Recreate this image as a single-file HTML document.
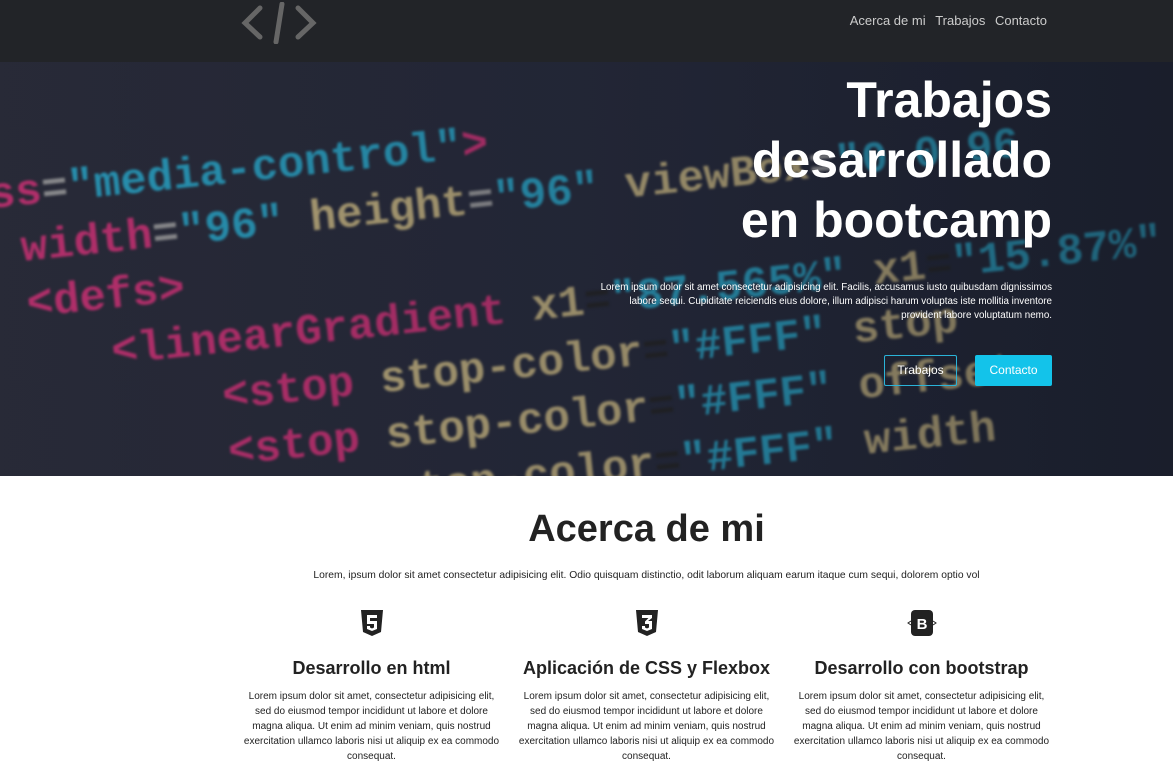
<!DOCTYPE html>
<html><head><meta charset="utf-8"><style>
*{margin:0;padding:0;box-sizing:border-box}
body{width:1173px;height:782px;overflow:hidden;font-family:"Liberation Sans",sans-serif;background:#fff;color:#222}
.nav{position:absolute;left:0;top:0;width:1173px;height:62px;background:#222428;z-index:3}
.nav .links{position:absolute;right:126px;top:13px;font-size:13px;color:#ccc}
.nav .links span{margin-left:6px}
.hero{position:absolute;left:0;top:62px;width:1173px;height:414px;overflow:hidden;background:linear-gradient(90deg,#2a2c3a,#262a3c 50%,#1e2436)}
.code{position:absolute;left:-40px;top:110px;font-family:"Liberation Mono",monospace;font-size:44px;font-weight:bold;line-height:56px;transform:rotate(-6deg);transform-origin:0 0;white-space:pre;filter:blur(1.2px);opacity:.85}
.p{color:#e0337e}.c{color:#2ab3d8}.y{color:#d8c48a}.w{color:#aaa}
.shade{position:absolute;inset:0;background:linear-gradient(90deg,rgba(20,22,30,.1),rgba(20,22,30,.25) 60%,rgba(20,22,30,.45))}
.ht{position:absolute;right:121px;top:8px;text-align:right;color:#fff;font-size:50px;font-weight:bold;line-height:60px}
.hp{position:absolute;right:121px;top:219px;width:465px;text-align:right;color:#fff;font-size:9.8px;line-height:14px}
.b1{position:absolute;left:884px;top:293px;width:73px;height:31px;border:1px solid #2ab3d8;color:#fff;font-size:12px;text-align:center;line-height:29px;border-radius:2px}
.b2{position:absolute;left:975px;top:293px;width:77px;height:31px;background:#13c3ea;color:#fff;font-size:12px;text-align:center;line-height:31px;border-radius:2px}
h2{position:absolute;top:508px;left:0;width:1293px;text-align:center;font-size:38px;color:#222}
.sub{position:absolute;top:570px;left:0;width:1293px;text-align:center;font-size:10.3px}
.col{position:absolute;top:610px;width:275px;text-align:center}
.col h3{font-size:18px;margin-top:17px;margin-bottom:10px}
.col p{font-size:10px;line-height:15px;width:262px;margin:0 auto}
.ic{display:inline-block;width:22px;height:26px}
</style></head><body>
<div class="nav">
<svg style="position:absolute;left:240px;top:2px" width="78" height="42" viewBox="0 0 78 42"><g fill="none" stroke="#666" stroke-width="5" stroke-linecap="round"><path d="M20 6 L5 21 L20 35"/><path d="M58 6 L73 21 L58 35"/><path d="M42 2 L36 40"/></g></svg>
<div class="links"><span>Acerca de mi</span> <span>Trabajos</span> <span>Contacto</span></div>
</div>
<div class="hero">
<div class="code"><span class="p">ass</span><span class="w">=</span><span class="c">"media-control"</span><span class="p">&gt;</span>
<span class="p">  width</span><span class="w">=</span><span class="c">"96"</span> <span class="y">height</span><span class="w">=</span><span class="c">"96"</span> <span class="y">viewBox</span><span class="w">=</span><span class="c">"0 0 96</span>
<span class="p">  &lt;defs&gt;</span>
<span class="p">     &lt;linearGradient</span> <span class="y">x1</span>=<span class="c">"87.565%"</span> <span class="y">x1</span>=<span class="c">"15.87%"</span>
<span class="p">         &lt;stop</span> <span class="y">stop-color</span>=<span class="c">"#FFF"</span> <span class="y">stop</span>
<span class="p">         &lt;stop</span> <span class="y">stop-color</span>=<span class="c">"#FFF"</span> <span class="y">offset</span>
<span class="p">         &lt;stop</span> <span class="y">stop-color</span>=<span class="c">"#FFF"</span> <span class="y">width</span></div>
<div class="shade"></div>
<div class="ht">Trabajos<br>desarrollado<br>en bootcamp</div>
<div class="hp">Lorem ipsum dolor sit amet consectetur adipisicing elit. Facilis, accusamus iusto quibusdam dignissimos labore sequi. Cupiditate reiciendis eius dolore, illum adipisci harum voluptas iste mollitia inventore provident labore voluptatum nemo.</div>
<div class="b1">Trabajos</div><div class="b2">Contacto</div>
</div>
<h2>Acerca de mi</h2>
<div class="sub">Lorem, ipsum dolor sit amet consectetur adipisicing elit. Odio quisquam distinctio, odit laborum aliquam earum itaque cum sequi, dolorem optio vol</div>
<div class="col" style="left:234px"><svg class="ic" viewBox="0 0 22 26"><path d="M0 0H22L20 22 11 26 2 22Z" fill="#222"/><path d="M6 5H16V8H9V11H16V19L11 21 6 19V16H9V17.5L11 18.5 13 17.5V14H6Z" fill="#fff"/></svg><h3>Desarrollo en html</h3><p>Lorem ipsum dolor sit amet, consectetur adipisicing elit, sed do eiusmod tempor incididunt ut labore et dolore magna aliqua. Ut enim ad minim veniam, quis nostrud exercitation ullamco laboris nisi ut aliquip ex ea commodo consequat.</p></div>
<div class="col" style="left:509px"><svg class="ic" viewBox="0 0 22 26"><path d="M0 0H22L20 22 11 26 2 22Z" fill="#222"/><path d="M6 5H16V8L12 11H16V19L11 21 6 19V16H9V17.5L11 18.5 13 17.5V14H9V11.5L12.5 8H6Z" fill="#fff"/></svg><h3>Aplicación de CSS y Flexbox</h3><p>Lorem ipsum dolor sit amet, consectetur adipisicing elit, sed do eiusmod tempor incididunt ut labore et dolore magna aliqua. Ut enim ad minim veniam, quis nostrud exercitation ullamco laboris nisi ut aliquip ex ea commodo consequat.</p></div>
<div class="col" style="left:784px"><svg class="ic" style="width:30px" viewBox="0 0 30 26"><rect x="4" y="0" width="22" height="26" rx="4" fill="#222"/><path d="M4 11L1 13 4 15M26 11L29 13 26 15" stroke="#222" fill="none"/><text x="15" y="19" text-anchor="middle" font-family="Liberation Sans" font-weight="bold" font-size="15" fill="#fff">B</text></svg><h3>Desarrollo con bootstrap</h3><p>Lorem ipsum dolor sit amet, consectetur adipisicing elit, sed do eiusmod tempor incididunt ut labore et dolore magna aliqua. Ut enim ad minim veniam, quis nostrud exercitation ullamco laboris nisi ut aliquip ex ea commodo consequat.</p></div>
</body></html>
